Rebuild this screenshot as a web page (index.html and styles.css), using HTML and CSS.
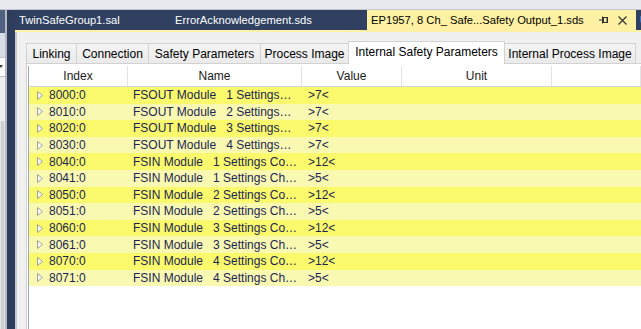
FILE: index.html
```html
<!DOCTYPE html>
<html lang="en">
<head>
  <meta charset="UTF-8">
  <title>EP1957 Safety Output - Internal Safety Parameters</title>
  <link rel="stylesheet" href="styles.css">
</head>
<body>

  <div class="topbar"></div>

  <div class="main">

    <div class="toolpanel">
      <div class="tool-title"></div>
      <div class="tool-band"></div>
      <div class="tool-combo">
        <svg width="5" height="4" viewBox="0 0 5 4"><polygon points="0,0 4,0 2,3" fill="#444"/></svg>
      </div>
      <div class="tool-small"></div>
      <div class="tool-rest"><div class="tool-scroll"></div></div>
    </div>

    <div class="gutter"></div>

    <div class="document">
      <div class="doctabs">
        <div class="doctab tab-group">TwinSafeGroup1.sal</div>
        <div class="doctab tab-ack">ErrorAcknowledgement.sds</div>
        <div class="doctab doctab-active">
          <span>EP1957, 8 Ch_ Safe...Safety Output_1.sds</span>
          <svg class="pin" width="10" height="8" viewBox="0 0 10 8">
            <line x1="0" y1="4" x2="3.5" y2="4" stroke="#333" stroke-width="1"/>
            <line x1="3.5" y1="0.5" x2="3.5" y2="7.5" stroke="#333" stroke-width="1"/>
            <rect x="4.5" y="1.5" width="4" height="5" fill="none" stroke="#333" stroke-width="1"/>
            <line x1="8" y1="1.5" x2="8" y2="6.5" stroke="#333" stroke-width="1"/>
          </svg>
          <svg class="close" width="9" height="9" viewBox="0 0 9 9">
            <path d="M0.5 0.5 L8.5 8.5 M8.5 0.5 L0.5 8.5" stroke="#333" stroke-width="1.2"/>
          </svg>
        </div>
        <div class="doctab">U</div>
      </div>
      <div class="docline"></div>

      <div class="docbody">
        <div class="tabstrip">
          <div class="tab tab-linking">Linking</div>
          <div class="tab tab-connection">Connection</div>
          <div class="tab tab-safety">Safety Parameters</div>
          <div class="tab tab-process">Process Image</div>
          <div class="tab tab-active">Internal Safety Parameters</div>
          <div class="tab tab-internal last">Internal Process Image</div>
        </div>

        <div class="tabpage">
          <div class="list">
            <div class="list-header">
              <div class="hcell">Index</div>
              <div class="hcell">Name</div>
              <div class="hcell">Value</div>
              <div class="hcell">Unit</div>
              <div class="hcell"></div>
            </div>
            <div id="rows"></div>
          </div>
        </div>
      </div>
    </div>

  </div>

  <script>
    const params = [
      ['8000:0', 'FSOUT Module   1 Settings…', '>7<'],
      ['8010:0', 'FSOUT Module   2 Settings…', '>7<'],
      ['8020:0', 'FSOUT Module   3 Settings…', '>7<'],
      ['8030:0', 'FSOUT Module   4 Settings…', '>7<'],
      ['8040:0', 'FSIN Module   1 Settings Co…', '>12<'],
      ['8041:0', 'FSIN Module   1 Settings Ch…', '>5<'],
      ['8050:0', 'FSIN Module   2 Settings Co…', '>12<'],
      ['8051:0', 'FSIN Module   2 Settings Ch…', '>5<'],
      ['8060:0', 'FSIN Module   3 Settings Co…', '>12<'],
      ['8061:0', 'FSIN Module   3 Settings Ch…', '>5<'],
      ['8070:0', 'FSIN Module   4 Settings Co…', '>12<'],
      ['8071:0', 'FSIN Module   4 Settings Ch…', '>5<']
    ];

    const arrow = '<svg class="expander" width="7" height="9" viewBox="0 0 7 9">' +
      '<polygon points="0.5,0.5 5.5,4.5 0.5,8.5" fill="#fbfbf0" stroke="#a0a0a0" stroke-width="1"/></svg>';

    let html = '';
    params.forEach(function (p, i) {
      html += '<div class="row ' + (i % 2 === 0 ? 'row-strong' : 'row-light') + '">' +
        '<div class="cell cell-index">' + arrow + '<span>' + p[0] + '</span></div>' +
        '<div class="cell cell-name">' + p[1] + '</div>' +
        '<div class="cell cell-value">' + p[2].replace('>', '&gt;').replace('<', '&lt;') + '</div>' +
        '<div class="cell"></div><div class="cell"></div>' +
        '</div>';
    });
    document.getElementById('rows').innerHTML = html;
  </script>

</body>
</html>
```

FILE: styles.css
```css
body {
  margin: 0;
  width: 641px;
  height: 329px;
  overflow: hidden;
  font-family: "Liberation Sans", Arial, sans-serif;
  background-color: #2d3d5b;
}

.topbar {
  height: 9px;
  background-color: #e7e9ef;
  border-bottom: 1px solid #c3c8d3;
}

.main {
  display: flex;
  height: 319px;
}

/* left tool window, mostly cut off */
.toolpanel {
  width: 5px;
  border-right: 2px solid #b3b8c1;
  display: flex;
  flex-direction: column;
  overflow: hidden;
}

.tool-title {
  height: 23px;
  background-color: #4e5f80;
}

.tool-band {
  height: 24px;
  background-color: #d9dde7;
}

.tool-combo {
  height: 18px;
  background-color: #ffffff;
  border-top: 1px solid #bfc4cc;
  border-bottom: 1px solid #bfc4cc;
  display: flex;
  align-items: center;
}

.tool-combo svg {
  margin-left: -1px;
}

.tool-small {
  height: 44px;
  background-color: #eceef2;
}

.tool-rest {
  flex: 1;
  background-color: #e4e5e8;
  padding-left: 1px;
}

.tool-scroll {
  height: 100%;
  width: 3px;
  background-color: #cfd0d3;
}

.gutter {
  width: 8px;
}

.document {
  flex: 1;
  display: flex;
  flex-direction: column;
  min-width: 0;
}

.doctabs {
  height: 20px;
  display: flex;
  background-color: #2f4061;
  overflow: hidden;
}

.doctab {
  flex: none;
  padding-left: 4px;
  font-size: 11.2px;
  color: #ffffff;
  display: flex;
  align-items: center;
  white-space: nowrap;
}

.tab-group {
  width: 152px;
}

.tab-ack {
  width: 192px;
}

.doctab-active {
  width: 256px;
  padding-right: 9px;
  background-color: #fef1a3;
  color: #000000;
}

.doctab-active .pin {
  margin-left: auto;
}

.doctab-active .close {
  margin-left: 9px;
}

.docline {
  height: 2px;
  background-color: #fdf1a6;
}

.docbody {
  flex: 1;
  background-color: #f0f0f0;
  border-left: 2px solid #c3c8d1;
  padding: 9px 0 0 9px;
  display: flex;
  flex-direction: column;
}

/* inner tab control */
.tabstrip {
  height: 22px;
  display: flex;
  align-items: flex-end;
}

.tab {
  box-sizing: border-box;
  height: 20px;
  border: 1px solid #d2d2d2;
  border-right: none;
  border-bottom: none;
  background: linear-gradient(#f4f4f4, #eaeaea);
  font-size: 12px;
  color: #000000;
  display: flex;
  align-items: center;
  justify-content: center;
  white-space: nowrap;
}

.tab.last {
  border-right: 1px solid #d2d2d2;
}

.tab-linking { width: 50px; }
.tab-connection { width: 72px; }
.tab-safety { width: 112px; }
.tab-process { width: 88px; }
.tab-internal { width: 131px; }

.tab-active {
  width: 157px;
  height: 23px;
  margin-bottom: -1px;
  border-right: 1px solid #d2d2d2;
  background: #ffffff;
  position: relative;
  z-index: 1;
  padding-bottom: 2px;
}

.tab-active + .tab {
  border-left: none;
}

.tabpage {
  flex: 1;
  background-color: #ffffff;
  border-top: 1px solid #d2d2d2;
  border-left: 1px solid #d2d2d2;
  padding: 2px 0 0 1px;
}

.list {
  height: 100%;
  border-left: 1px solid #9ba7ba;
}

.list-header,
.row {
  display: grid;
  grid-template-columns: 99px 174px 100px 150px 1fr;
}

.list-header {
  height: 20px;
  border-bottom: 1px solid #d5d5d5;
}

.hcell {
  border-right: 1px solid #e3e3e3;
  font-size: 12px;
  color: #1a1a1a;
  display: flex;
  align-items: center;
  justify-content: center;
}

.row {
  height: 16.6px;
  align-items: center;
  font-size: 12px;
  color: #1c2552;
}

.row-strong {
  background-color: #fafa6c;
}

.row-light {
  background-color: #f9f9b2;
}

.cell {
  white-space: pre;
  overflow: hidden;
}

.cell-index {
  display: flex;
  align-items: center;
  padding-left: 8px;
}

.cell-index .expander {
  margin-right: 5px;
}

.cell-name {
  padding-left: 5px;
}

.cell-value {
  padding-left: 6px;
}
```
